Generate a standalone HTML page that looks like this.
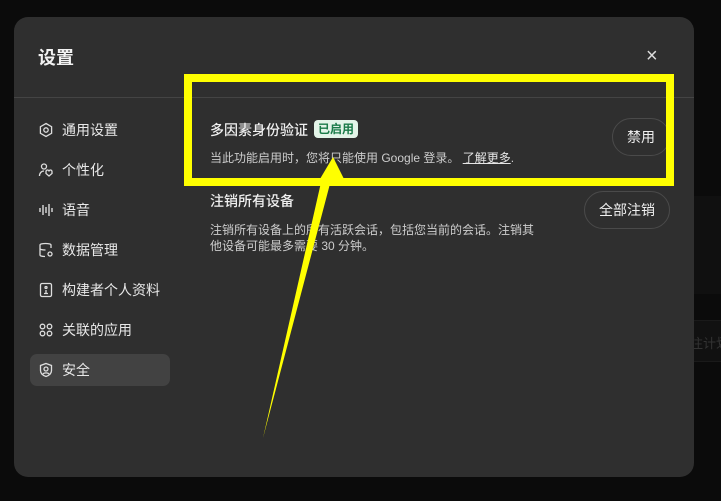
<!DOCTYPE html>
<html><head><meta charset="utf-8"><style>
*{margin:0;padding:0;box-sizing:border-box}
body{width:721px;height:501px;background:#0b0b0b;position:relative;overflow:hidden;font-family:"Liberation Sans","Noto Sans CJK SC",sans-serif;color:#ececec}
.m{position:absolute;left:14px;top:17px;width:680px;height:460px;background:#2f2f2f;border-radius:14px}
.a{position:absolute;white-space:nowrap}
.nav{position:absolute;left:38px;font-size:14px;color:#e8e8e8}
.nav svg{position:absolute;left:0;top:2px}
.nav span{position:absolute;left:24px;top:0;white-space:nowrap}
.btn{position:absolute;border:1px solid #4a4a4a;border-radius:19px;font-size:14px;color:#f0f0f0;display:flex;align-items:center;justify-content:center}
.d{font-size:12px;color:#cdcdcd}
</style></head><body>
<div class="a" style="left:694px;top:196px;width:27px;height:98px;background:#101010"></div>
<div class="a" style="left:694px;top:320px;width:27px;height:42px;background:#111;border-top:1px solid #1a1a1a;border-bottom:1px solid #1a1a1a"></div>
<div class="a" style="left:690px;top:333px;font-size:13px;color:#333">注计划</div>
<div class="m"></div>
<div class="a" style="left:38px;top:44px;font-size:18px;font-weight:bold;color:#f2f2f2">设置</div>
<div class="a" style="left:646px;top:45px;font-size:20px;color:#ddd">×</div>
<div class="a" style="left:14px;top:97px;width:680px;height:1px;background:#444"></div>
<div class="a" style="left:30px;top:354px;width:140px;height:32px;background:#424242;border-radius:7px"></div>

<div class="nav" style="top:120px"><svg width="16" height="16" viewBox="0 0 16 16" fill="none" stroke="#ddd" stroke-width="1.3"><path d="M8 1.5l5.6 3.2v6.6L8 14.5l-5.6-3.2V4.7z"/><circle cx="8" cy="8" r="2.2"/></svg><span>通用设置</span></div>
<div class="nav" style="top:160px"><svg width="16" height="16" viewBox="0 0 16 16" fill="none" stroke="#ddd" stroke-width="1.3"><circle cx="6" cy="4.5" r="2.5"/><path d="M1.5 14c0-3 2-5 4.5-5"/><path d="M11 14l-3-2.5v-2a1.5 1.5 0 013 0 1.5 1.5 0 013 0v2z"/></svg><span>个性化</span></div>
<div class="nav" style="top:200px"><svg width="16" height="16" viewBox="0 0 16 16" fill="none" stroke="#ddd" stroke-width="1.4"><path d="M2 6v4M5 3v10M8 5v6M11 2v12M14 6v4"/></svg><span>语音</span></div>
<div class="nav" style="top:240px"><svg width="16" height="16" viewBox="0 0 16 16" fill="none" stroke="#ddd" stroke-width="1.3"><path d="M13 6V3c0-1-2.5-1.5-5.5-1.5S2 2 2 3v10c0 1 2.5 1.5 5 1.5"/><path d="M2 6.5c0 1 2.5 1.5 5.5 1.5"/><circle cx="12" cy="12" r="2"/></svg><span>数据管理</span></div>
<div class="nav" style="top:280px"><svg width="16" height="16" viewBox="0 0 16 16" fill="none" stroke="#ddd" stroke-width="1.3"><rect x="2.5" y="1.5" width="11" height="13" rx="1.5"/><circle cx="8" cy="5.5" r="1"/><path d="M8 8v3M6 11.5h4"/></svg><span>构建者个人资料</span></div>
<div class="nav" style="top:320px"><svg width="16" height="16" viewBox="0 0 16 16" fill="none" stroke="#ddd" stroke-width="1.3"><circle cx="4.5" cy="4.5" r="2.3"/><circle cx="11.5" cy="4.5" r="2.3"/><circle cx="4.5" cy="11.5" r="2.3"/><circle cx="11.5" cy="11.5" r="2.3"/></svg><span>关联的应用</span></div>
<div class="nav" style="top:360px"><svg width="16" height="16" viewBox="0 0 16 16" fill="none" stroke="#ddd" stroke-width="1.3"><path d="M8 1.5l5.5 2v5c0 3-2.5 5-5.5 6-3-1-5.5-3-5.5-6v-5z"/><circle cx="8" cy="7" r="2"/><path d="M5 12c1-1.5 5-1.5 6 0"/></svg><span>安全</span></div>

<div class="a" style="left:210px;top:120px;font-size:14px;font-weight:500;color:#f0f0f0">多因素身份验证</div>
<div class="a" style="left:314px;top:120px;width:44px;height:18px;background:#e3f4e8;border-radius:4px;font-size:12px;font-weight:bold;color:#1a7a48;text-align:center;line-height:18px">已启用</div>
<div class="a d" style="left:210px;top:149px">当此功能启用时，您将只能使用 Google 登录。 <u style="color:#e6e6e6">了解更多</u>.</div>
<div class="btn" style="left:612px;top:118px;width:58px;height:38px">禁用</div>
<div class="a" style="left:210px;top:178px;width:460px;height:1px;background:#444"></div>
<div class="a" style="left:210px;top:191px;font-size:14px;font-weight:500;color:#f0f0f0">注销所有设备</div>
<div class="btn" style="left:584px;top:191px;width:86px;height:38px">全部注销</div>
<div class="a d" style="left:210px;top:222px;line-height:16px">注销所有设备上的所有活跃会话，包括您当前的会话。注销其<br>他设备可能最多需要 30 分钟。</div>

<div class="a" style="left:184px;top:74px;width:490px;height:112px;border:8px solid #ffff00"></div>
<svg class="a" style="left:0;top:0" width="721" height="501"><polygon points="333,157 346,183 331,180 263,438 322,178 317,184" fill="#ffff00"/></svg>
</body></html>
